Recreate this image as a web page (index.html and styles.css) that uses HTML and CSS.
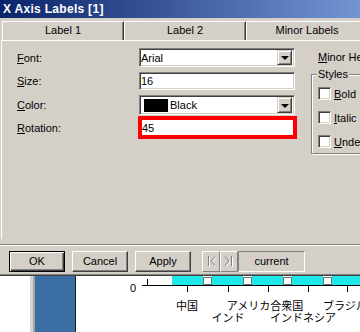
FILE: index.html
```html
<!DOCTYPE html>
<html lang="en">
<head>
    <meta charset="UTF-8">
    <meta name="viewport" content="width=device-width, initial-scale=1.0">
    <title>X Axis Labels [1]</title>
    <link rel="stylesheet" href="styles.css">
</head>
<body>
    <div class="dialog">
        <div class="titlebar">X Axis Labels [1]</div>

        <div class="tabs">
            <div class="tab active">Label 1</div>
            <div class="tab">Label 2</div>
            <div class="tab">Minor Labels</div>
        </div>

        <div class="panel">
            <div class="fields">
                <div class="row row-font">
                    <label><u>F</u>ont:</label>
                    <div class="field combo">
                        <span class="value">Arial</span>
                        <span class="drop"><span class="arrow"></span></span>
                    </div>
                </div>
                <div class="row row-size">
                    <label><u>S</u>ize:</label>
                    <div class="field">16</div>
                </div>
                <div class="row row-color">
                    <label><u>C</u>olor:</label>
                    <div class="field combo">
                        <span class="swatch"></span>
                        <span class="value">Black</span>
                        <span class="drop"><span class="arrow"></span></span>
                    </div>
                </div>
                <div class="row row-rotation">
                    <label><u>R</u>otation:</label>
                    <div class="field highlight">45</div>
                </div>
            </div>

            <div class="side">
                <div class="minor"><u>M</u>inor Heading</div>
                <fieldset class="group">
                    <legend>Styles</legend>
                    <div class="check"><span class="box"></span><span><u>B</u>old</span></div>
                    <div class="check"><span class="box"></span><span><u>I</u>talic</span></div>
                    <div class="check"><span class="box"></span><span><u>U</u>nderline</span></div>
                </fieldset>
            </div>
        </div>

        <div class="separator"></div>

        <div class="buttons">
            <div class="btn default">OK</div>
            <div class="btn">Cancel</div>
            <div class="btn">Apply</div>
            <div class="nav">
                <div class="nav-btn">
                    <svg width="16" height="19" viewBox="0 0 16 19">
                        <g fill="none" stroke="#fff">
                            <path d="M6.5 5v10M13 5.5l-4 4.5 4 4.5"/>
                        </g>
                        <g fill="none" stroke="#808080">
                            <path d="M5.5 4v10M12 4.5l-4 4.5 4 4.5"/>
                        </g>
                    </svg>
                </div>
                <div class="nav-btn">
                    <svg width="16" height="19" viewBox="0 0 16 19">
                        <g fill="none" stroke="#fff">
                            <path d="M5 5.5l4 4.5-4 4.5M11.5 5v10"/>
                        </g>
                        <g fill="none" stroke="#808080">
                            <path d="M4 4.5l4 4.5-4 4.5M10.5 4v10"/>
                        </g>
                    </svg>
                </div>
                <div class="current">current</div>
            </div>
        </div>
    </div>

    <div class="chart">
        <svg width="360" height="56" viewBox="0 0 360 56">
            <!-- desktop strip behind the chart window -->
            <rect x="30" y="0" width="3" height="56" fill="#d4d4d4"/>
            <rect x="33" y="0" width="2" height="56" fill="#a4a4a4"/>
            <rect x="35" y="0" width="40" height="56" fill="#3a6ea5"/>
            <rect x="75" y="0" width="1" height="56" fill="#1c1c1c"/>

            <!-- bars -->
            <g fill="#1ee8e8">
                <rect x="172" y="0" width="31" height="9"/>
                <rect x="212" y="0" width="31" height="9"/>
                <rect x="252" y="0" width="31" height="9"/>
                <rect x="292" y="0" width="31" height="9"/>
                <rect x="332" y="0" width="28" height="9"/>
            </g>
            <g fill="#fff" stroke="#707070">
                <rect x="203.5" y="1.5" width="8" height="7"/>
                <rect x="243.5" y="1.5" width="8" height="7"/>
                <rect x="283.5" y="1.5" width="8" height="7"/>
                <rect x="323.5" y="1.5" width="8" height="7"/>
            </g>

            <!-- axes -->
            <g stroke="#000" fill="none">
                <path d="M142 9.5H360"/>
                <path d="M147.5 3V10"/>
                <path d="M187.5 10v6M228.5 10v6M268.5 10v6M308.5 10v6M347.5 10v6"/>
            </g>
            <text x="130" y="16" class="tick">0</text>

            <!-- category labels -->
            <g class="cat">
                <text x="187" y="34" text-anchor="middle">中国</text>
                <text x="265" y="34" text-anchor="middle">アメリカ合衆国</text>
                <text x="323" y="34">ブラジル</text>
                <text x="228" y="46" text-anchor="middle">インド</text>
                <text x="303" y="46" text-anchor="middle">インドネシア</text>
            </g>
        </svg>
    </div>
</body>
</html>
```

FILE: styles.css
```css
html, body {
    margin: 0;
    padding: 0;
    overflow: hidden;
}
body {
    width: 360px;
    height: 332px;
    background-color: #fff;
    font-family: "Liberation Sans", Arial, sans-serif;
    font-size: 11px;
    color: #000;
}
.dialog {
    width: 460px;
    height: 276px;
    box-sizing: border-box;
    background-color: #d4d0c8;
    display: flex;
    flex-direction: column;
    border-bottom: 1px solid #404040;
    box-shadow: inset 0 -1px 0 #808080;
}
.titlebar {
    height: 18px;
    line-height: 18px;
    padding-left: 3px;
    color: #fff;
    font-weight: bold;
    font-size: 12px;
    letter-spacing: 0.3px;
    background: linear-gradient(90deg, #0a246a 0px, #7395d2 360px, #a6caf0 460px);
}
.tabs {
    display: flex;
    margin-top: 3px;
    padding-left: 2px;
    height: 19px;
}
.tab {
    width: 122px;
    flex-shrink: 0;
    box-sizing: border-box;
    border-top: 1px solid #fff;
    border-left: 1px solid #fff;
    border-right: 1px solid #404040;
    box-shadow: inset -1px 0 0 #808080;
    text-align: center;
    line-height: 16px;
}
.panel {
    height: 199px;
    box-sizing: border-box;
    margin-left: 1px;
    border-top: 1px solid #fff;
    border-left: 1px solid #fff;
    padding: 7px 0 0 15px;
    display: flex;
}
.fields {
    width: 294px;
    flex-shrink: 0;
}
.row {
    display: flex;
    align-items: center;
}
.row label {
    width: 122px;
}
.row-font {
    height: 19px;
}
.row-size {
    height: 18px;
    margin-top: 5px;
}
.row-color {
    height: 20px;
    margin-top: 5px;
}
.row-rotation {
    height: 23px;
    margin-top: 1px;
}
.field {
    box-sizing: border-box;
    width: 156px;
    height: 100%;
    background-color: #fff;
    border: 1px solid;
    border-color: #808080 #fff #fff #808080;
    box-shadow: inset 1px 1px 0 #404040, inset -1px -1px 0 #d4d0c8;
    padding: 0 2px 0 1px;
    display: flex;
    align-items: center;
}
.combo .drop {
    margin-left: auto;
    width: 15px;
    height: 15px;
    box-sizing: border-box;
    background-color: #d4d0c8;
    border: 1px solid;
    border-color: #d4d0c8 #404040 #404040 #d4d0c8;
    box-shadow: inset 1px 1px 0 #fff, inset -1px -1px 0 #808080;
    display: flex;
    align-items: center;
    justify-content: center;
}
.row-color .drop {
    height: 16px;
}
.arrow {
    width: 0;
    height: 0;
    border-left: 4px solid transparent;
    border-right: 4px solid transparent;
    border-top: 4px solid #000;
    margin-top: 1px;
}
.swatch {
    width: 24px;
    height: 13px;
    margin: 0 2px 0 3px;
    background-color: #000;
}
.field.highlight {
    width: 159px;
    margin-left: -1px;
    border: 4px solid #ff0000;
    box-shadow: none;
    padding-left: 0;
}
.side {
    flex-shrink: 0;
    width: 130px;
}
.minor {
    height: 19px;
    line-height: 19px;
    padding-left: 7px;
    white-space: nowrap;
}
.group {
    margin: 1px 0 0 0;
    padding: 0 0 5px 6px;
    border: 1px solid #808080;
    box-shadow: inset 1px 1px 0 #fff, 1px 1px 0 #fff;
}
.group legend {
    padding: 0 1px;
    margin-left: -1px;
    line-height: 12px;
    background-color: #d4d0c8;
}
.check {
    display: flex;
    align-items: center;
    height: 13px;
    margin-top: 11px;
    white-space: nowrap;
}
.check:first-of-type {
    margin-top: 7px;
}
.box {
    width: 13px;
    height: 13px;
    box-sizing: border-box;
    margin-right: 3px;
    background-color: #fff;
    border: 1px solid;
    border-color: #808080 #fff #fff #808080;
    box-shadow: inset 1px 1px 0 #404040, inset -1px -1px 0 #d4d0c8;
}
.separator {
    margin-top: 5px;
    height: 1px;
    border-top: 1px solid #808080;
    background-color: #fff;
}
.buttons {
    display: flex;
    margin-top: 5px;
    padding-left: 9px;
    gap: 7px;
    height: 21px;
}
.btn {
    width: 56px;
    height: 21px;
    box-sizing: border-box;
    border: 1px solid;
    border-color: #fff #404040 #404040 #fff;
    box-shadow: inset -1px -1px 0 #808080;
    text-align: center;
    line-height: 19px;
}
.btn.default {
    border-color: #000;
    box-shadow: inset 1px 1px 0 #fff, inset -1px -1px 0 #404040, inset -2px -2px 0 #808080;
}
.nav {
    display: flex;
    margin-left: 4px;
}
.nav-btn {
    width: 18px;
    height: 21px;
    box-sizing: border-box;
    border: 1px solid;
    border-color: #fff #808080 #808080 #fff;
}
.nav-btn svg {
    display: block;
}
.current {
    width: 67px;
    height: 21px;
    box-sizing: border-box;
    border: 1px solid;
    border-color: #808080 #fff #fff #808080;
    text-align: center;
    line-height: 19px;
}
.chart svg {
    display: block;
}
.chart .tick {
    font-family: "Liberation Sans", Arial, sans-serif;
    font-size: 11px;
}
.chart .cat {
    font-family: "Noto Sans CJK JP", sans-serif;
    font-size: 11px;
}
```
